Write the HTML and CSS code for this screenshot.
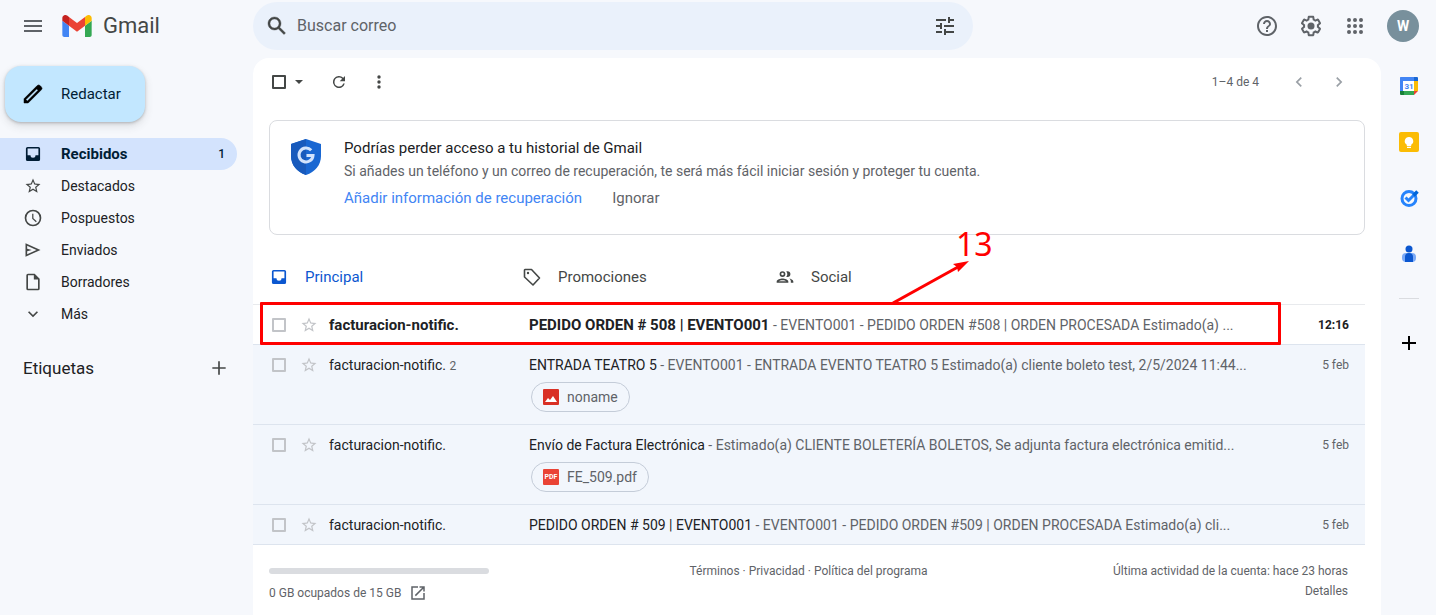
FILE: index.html
```html
<!DOCTYPE html>
<html lang="es">
<head>
<meta charset="utf-8">
<meta name="viewport" content="width=device-width, initial-scale=1">
<title>Recibidos - Gmail</title>
<link rel="stylesheet" href="styles.css">
</head>
<body>
<svg class="defs" aria-hidden="true">
  <symbol id="star" viewBox="0 0 24 24"><path d="M22 9.24l-7.19-.62L12 2 9.19 8.63 2 9.24l5.46 4.73L5.82 21 12 17.27 18.18 21l-1.63-7.03L22 9.24zM12 15.4l-3.76 2.27 1-4.28-3.32-2.88 4.38-.38L12 6.1l1.71 4.04 4.38.38-3.32 2.88 1 4.28L12 15.4z"/></symbol>
  <symbol id="inbox" viewBox="0 0 24 24"><path d="M18.500 3.500h-13a2 2 0 0 0-2 2v13a2 2 0 0 0 2 2h13a2 2 0 0 0 2-2v-13a2 2 0 0 0-2-2zm0 10H15a3 3 0 0 1-6 0H5.500v-8h13v8z"/></symbol>
</svg>

<header class="topbar">
  <div class="brand">
    <button class="icon-btn" aria-label="Menú principal"><svg class="icon-24 muted" viewBox="0 0 24 24"><path d="M3 18h18v-2H3v2zm0-5h18v-2H3v2zm0-7v2h18V6H3z"/></svg></button>
    <a class="logo" href="#">
      <svg class="logo-mark" viewBox="52 42 88 66" aria-hidden="true">
        <path fill="#4285f4" d="M58 108h14V74L52 59v43c0 3.32 2.69 6 6 6"/>
        <path fill="#34a853" d="M120 108h14c3.32 0 6-2.69 6-6V59l-20 15"/>
        <path fill="#fbbc04" d="M120 48v26l20-15v-8c0-7.42-8.47-11.65-14.4-7.2"/>
        <path fill="#ea4335" d="M72 74V48l24 18 24-18v26L96 92"/>
        <path fill="#c5221f" d="M52 51v8l20 15V48l-5.6-4.2c-5.94-4.45-14.4-.22-14.4 7.2"/>
      </svg>
      <span>Gmail</span>
    </a>
  </div>
  <form class="search" role="search">
    <button type="button" class="icon-btn" aria-label="Buscar"><svg class="icon-24" viewBox="0 0 24 24"><path d="M20.49 19l-5.73-5.73C15.53 12.2 16 10.91 16 9.5 16 5.91 13.09 3 9.5 3S3 5.91 3 9.5 5.91 16 9.5 16c1.41 0 2.7-.47 3.77-1.24L19 20.49 20.49 19zM5 9.5C5 7.01 7.01 5 9.5 5S14 7.01 14 9.5 11.99 14 9.5 14 5 11.99 5 9.5z" stroke="#444746" stroke-width=".4"/></svg></button>
    <input type="text" placeholder="Buscar correo" aria-label="Buscar correo">
    <button type="button" class="icon-btn" aria-label="Opciones de búsqueda"><svg class="icon-24" viewBox="0 0 24 24"><path d="M3 17v2h6v-2H3zM3 5v2h10V5H3zm10 16v-2h8v-2h-8v-2h-2v6h2zM7 9v2H3v2h4v2h2V9H7zm14 4v-2H11v2h10zm-6-4h2V7h4V5h-4V3h-2v6z"/></svg></button>
  </form>
  <nav class="account">
    <button class="icon-btn" aria-label="Asistencia"><svg class="icon-24 muted" viewBox="0 0 24 24"><path d="M11 18h2v-2h-2v2zm1-16C6.48 2 2 6.48 2 12s4.48 10 10 10 10-4.48 10-10S17.52 2 12 2zm0 18c-4.41 0-8-3.59-8-8s3.59-8 8-8 8 3.59 8 8-3.59 8-8 8zm0-14c-2.21 0-4 1.79-4 4h2c0-1.1.9-2 2-2s2 .9 2 2c0 2-3 1.75-3 5h2c0-2.25 3-2.5 3-5 0-2.21-1.79-4-4-4z"/></svg></button>
    <button class="icon-btn" aria-label="Configuración"><svg class="icon-24 muted" viewBox="0 0 24 24"><path d="M13.85 22.25h-3.7c-.74 0-1.36-.54-1.45-1.27l-.27-1.89c-.27-.14-.53-.29-.79-.46l-1.8.72c-.7.26-1.47-.03-1.81-.65L2.2 15.53c-.35-.66-.2-1.44.36-1.88l1.53-1.19c-.01-.15-.02-.3-.02-.46 0-.15.01-.31.02-.46l-1.52-1.19c-.59-.45-.74-1.26-.37-1.88l1.85-3.19c.34-.62 1.11-.9 1.79-.63l1.81.73c.26-.17.52-.32.78-.46l.27-1.91c.09-.7.71-1.25 1.44-1.25h3.7c.74 0 1.36.54 1.45 1.27l.27 1.89c.27.14.53.29.79.46l1.8-.72c.71-.26 1.48.03 1.82.65l1.84 3.18c.36.66.2 1.44-.36 1.88l-1.52 1.19c.01.15.02.3.02.46s-.01.31-.02.46l1.52 1.19c.56.45.72 1.23.37 1.86l-1.86 3.22c-.34.62-1.11.9-1.8.63l-1.8-.72c-.26.17-.52.32-.78.46l-.27 1.91c-.1.68-.72 1.22-1.46 1.22zm-3.23-2h2.76l.37-2.55.53-.22c.44-.18.88-.44 1.34-.78l.45-.34 2.38.96 1.38-2.4-2.03-1.58.07-.56c.03-.26.06-.51.06-.78s-.03-.53-.06-.78l-.07-.56 2.03-1.58-1.39-2.4-2.39.96-.45-.35c-.42-.32-.87-.58-1.33-.77l-.52-.22-.37-2.55h-2.76l-.37 2.55-.53.21c-.44.19-.88.44-1.34.79l-.45.33-2.38-.95-1.39 2.39 2.03 1.58-.07.56a7 7 0 0 0-.06.79c0 .26.02.53.06.78l.07.56-2.03 1.58 1.38 2.4 2.39-.96.45.35c.43.33.86.58 1.33.77l.53.22.38 2.55z"/><circle cx="12" cy="12" r="3.5"/></svg></button>
    <button class="icon-btn" aria-label="Aplicaciones de Google"><svg class="icon-24 muted" viewBox="0 0 24 24"><path d="M6 8a2 2 0 1 0 0-4 2 2 0 0 0 0 4zm6 12a2 2 0 1 0 0-4 2 2 0 0 0 0 4zm-6 0a2 2 0 1 0 0-4 2 2 0 0 0 0 4zm0-6a2 2 0 1 0 0-4 2 2 0 0 0 0 4zm6 0a2 2 0 1 0 0-4 2 2 0 0 0 0 4zm4-8a2 2 0 1 0 4 0 2 2 0 0 0-4 0zm-4 2a2 2 0 1 0 0-4 2 2 0 0 0 0 4zm6 6a2 2 0 1 0 0-4 2 2 0 0 0 0 4zm0 6a2 2 0 1 0 0-4 2 2 0 0 0 0 4z"/></svg></button>
    <button class="avatar" aria-label="Cuenta de Google">W</button>
  </nav>
</header>

<div class="workspace">
  <aside class="sidebar">
    <button class="compose"><svg class="icon-24" viewBox="0 0 24 24"><path d="M20.41 4.94l-1.35-1.35a2 2 0 0 0-2.83 0L3 16.82V21h4.18L20.41 7.77a2 2 0 0 0 0-2.83zM6.41 19.06l-1.47-1.47 10.7-10.7 1.47 1.47-10.7 10.7z" stroke="#000" stroke-width=".5"/></svg>Redactar</button>
    <nav class="folders">
      <a class="folder active" href="#"><svg class="icon-20" aria-hidden="true"><use href="#inbox"/></svg><span>Recibidos</span><b>1</b></a>
      <a class="folder" href="#"><svg class="icon-18" aria-hidden="true"><use href="#star"/></svg><span>Destacados</span></a>
      <a class="folder" href="#"><svg class="icon-20" viewBox="0 0 24 24"><path d="M12 2a10 10 0 1 0 0 20 10 10 0 0 0 0-20zm0 18a8 8 0 1 1 0-16 8 8 0 0 1 0 16zm.5-13H11v6l4.5 4.2 1-1.2-4-3.8V7z"/></svg><span>Pospuestos</span></a>
      <a class="folder" href="#"><svg class="icon-20" viewBox="0 0 24 24"><path d="M3 4v16l18-8L3 4zm2 3l11.200 5L5 17v-3.500l5.500-1.500L5 10.500V7z"/></svg><span>Enviados</span></a>
      <a class="folder" href="#"><svg class="icon-20" viewBox="0 0 24 24"><path d="M14 2H6a2 2 0 0 0-2 2v16a2 2 0 0 0 2 2h12a2 2 0 0 0 2-2V8l-6-6zm4 18H6V4h7v5h5v11z"/></svg><span>Borradores</span></a>
      <a class="folder" href="#"><svg class="icon-20" viewBox="0 0 24 24"><path d="M16.590 8.590L12 13.170 7.410 8.590 6 10l6 6 6-6z"/></svg><span>Más</span></a>
    </nav>
    <div class="labels"><h2>Etiquetas</h2><button class="icon-btn" aria-label="Crear etiqueta"><svg class="icon-20" viewBox="0 0 24 24"><path d="M20 13h-7v7h-2v-7H4v-2h7V4h2v7h7v2z"/></svg></button></div>
  </aside>

  <main class="mail">
    <div class="toolbar">
      <input type="checkbox" class="check dark" aria-label="Seleccionar todo">
      <button class="icon-btn caret" aria-label="Seleccionar"><svg class="icon-20" viewBox="0 0 20 20"><path d="M6 8l4 4 4-4z"/></svg></button>
      <button class="icon-btn refresh" aria-label="Actualizar"><svg class="icon-18" viewBox="0 0 24 24"><path d="M17.650 6.350A8 8 0 1 0 19.730 14h-2.080A6 6 0 1 1 12 6c1.660 0 3.140.69 4.220 1.780L13 11h7V4l-2.350 2.350z"/></svg></button>
      <button class="icon-btn" aria-label="Más"><svg class="icon-20" viewBox="0 0 20 20"><circle cx="10" cy="5" r="1.700"/><circle cx="10" cy="10" r="1.700"/><circle cx="10" cy="15" r="1.700"/></svg></button>
      <span class="count">1–4 de 4</span>
      <button class="icon-btn pager" aria-label="Más recientes"><svg class="icon-20" viewBox="0 0 24 24"><path d="M15.410 7.410L14 6l-6 6 6 6 1.410-1.410L10.830 12z"/></svg></button>
      <button class="icon-btn pager" aria-label="Anteriores"><svg class="icon-20" viewBox="0 0 24 24"><path d="M8.590 16.590L10 18l6-6-6-6-1.410 1.410L13.170 12z"/></svg></button>
    </div>

    <section class="notice">
      <svg class="shield" viewBox="0 0 30 36" aria-hidden="true">
        <path fill="#1967d2" d="M15 0l15 5v12c0 9-6 16-15 19C6 33 0 26 0 17V5z"/>
        <path fill="#185abc" d="M15 0v36C6 33 0 26 0 17V5z"/>
        <path fill="none" stroke="#d2e3fc" stroke-width="3" d="M20.200 11.200A7 7 0 1 0 22 16.500h-6.500"/>
      </svg>
      <div class="notice-text">
        <h3>Podrías perder acceso a tu historial de Gmail</h3>
        <p>Si añades un teléfono y un correo de recuperación, te será más fácil iniciar sesión y proteger tu cuenta.</p>
        <div class="notice-actions"><a href="#">Añadir información de recuperación</a><button>Ignorar</button></div>
      </div>
    </section>

    <nav class="tabs">
      <a class="tab active" href="#"><svg class="icon-20" aria-hidden="true"><use href="#inbox"/></svg>Principal</a>
      <a class="tab" href="#"><svg class="icon-20" viewBox="0 0 20 20"><path fill="none" stroke="#444746" stroke-width="1.600" stroke-linejoin="round" d="M3 2.500h6.500l8 8.500-6.500 7L2.500 10V3z"/><circle cx="6" cy="6" r="1.200"/></svg>Promociones</a>
      <a class="tab" href="#"><svg class="icon-20" viewBox="0 0 24 24"><path d="M9 13.750c-2.340 0-7 1.170-7 3.500V19h14v-1.750c0-2.330-4.660-3.500-7-3.500zM4.340 17c.84-.58 2.870-1.250 4.660-1.250s3.820.67 4.660 1.250H4.340zM9 12a3.500 3.500 0 1 0 0-7 3.500 3.500 0 0 0 0 7zm0-5a1.500 1.500 0 1 1 0 3 1.500 1.500 0 0 1 0-3zm8.040 6.810c1.160.84 1.960 1.960 1.960 3.440V19h3v-1.750c0-2.020-3.500-3.170-4.960-3.440zM15 12a3.500 3.500 0 1 0 0-7c-.54 0-1.040.13-1.500.35a5 5 0 0 1 0 6.300c.46.220.96.350 1.500.350z"/></svg>Social</a>
    </nav>

    <div class="messages">
      <article class="message unread">
        <input type="checkbox" class="check" aria-label="Seleccionar mensaje">
        <button class="star" aria-label="Destacar"><svg class="icon-18"><use href="#star"/></svg></button>
        <div class="sender">facturacion-notific.</div>
        <div class="body"><p><strong>PEDIDO ORDEN # 508 | EVENTO001</strong> - EVENTO001 - PEDIDO ORDEN #508 | ORDEN PROCESADA Estimado(a) ...</p></div>
        <time>12:16</time>
        <div class="callout">
          <span>13</span>
          <svg viewBox="0 0 78 44" aria-hidden="true"><path d="M1 43L66 7" fill="none" stroke="#f00" stroke-width="3"/><path fill="#f00" d="M77 1L61 4l4 3 1 5z"/></svg>
        </div>
      </article>
      <article class="message">
        <input type="checkbox" class="check" aria-label="Seleccionar mensaje">
        <button class="star" aria-label="Destacar"><svg class="icon-18"><use href="#star"/></svg></button>
        <div class="sender">facturacion-notific. <small>2</small></div>
        <div class="body"><p><span>ENTRADA TEATRO 5</span> - EVENTO001 - ENTRADA EVENTO TEATRO 5 Estimado(a) cliente boleto test, 2/5/2024 11:44...</p>
          <button class="attachment"><svg class="icon-16" viewBox="0 0 16 16"><rect width="16" height="16" rx="1" fill="#d93025"/><path fill="#fff" d="M2 13l3-4 2 2 3-4 4 6z"/></svg>noname</button></div>
        <time>5 feb</time>
      </article>
      <article class="message">
        <input type="checkbox" class="check" aria-label="Seleccionar mensaje">
        <button class="star" aria-label="Destacar"><svg class="icon-18"><use href="#star"/></svg></button>
        <div class="sender">facturacion-notific.</div>
        <div class="body"><p><span>Envío de Factura Electrónica</span> - Estimado(a) CLIENTE BOLETERÍA BOLETOS, Se adjunta factura electrónica emitid...</p>
          <button class="attachment"><i class="pdf">PDF</i>FE_509.pdf</button></div>
        <time>5 feb</time>
      </article>
      <article class="message">
        <input type="checkbox" class="check" aria-label="Seleccionar mensaje">
        <button class="star" aria-label="Destacar"><svg class="icon-18"><use href="#star"/></svg></button>
        <div class="sender">facturacion-notific.</div>
        <div class="body"><p><span>PEDIDO ORDEN # 509 | EVENTO001</span> - EVENTO001 - PEDIDO ORDEN #509 | ORDEN PROCESADA Estimado(a) cli...</p></div>
        <time>5 feb</time>
      </article>
    </div>

    <footer class="footer">
      <div class="storage"><div class="meter"></div><a href="#">0 GB ocupados de 15 GB <svg class="icon-18" viewBox="0 0 24 24"><path d="M19 19H5V5h7V3H3v18h18v-9h-2v7zM14 3v2h3.590l-9.830 9.830 1.410 1.410L19 6.410V10h2V3h-7z"/></svg></a></div>
      <div class="legal"><a href="#">Términos</a> · <a href="#">Privacidad</a> · <a href="#">Política del programa</a></div>
      <div class="activity">Última actividad de la cuenta: hace 23 horas<br><a href="#">Detalles</a></div>
    </footer>
  </main>

  <aside class="rail">
    <button class="icon-btn" aria-label="Calendar"><svg class="icon-20" viewBox="0 0 20 20"><path fill="#4285f4" d="M1.500 1H15v4H5v10H1V1.500z"/><path fill="#1967d2" d="M15 1h3a1 1 0 0 1 1 1v3h-4z"/><path fill="#fbbc04" d="M15 5h4v10h-4z"/><path fill="#34a853" d="M5 15h10v4H5z"/><path fill="#188038" d="M1 15h4v4H2a1 1 0 0 1-1-1z"/><path fill="#ea4335" d="M15 15h4l-4 4z"/><path fill="#fff" d="M4 5h11v10H4z"/><text x="10" y="13" class="cal-day">31</text></svg></button>
    <button class="icon-btn" aria-label="Keep"><svg class="icon-20" viewBox="0 0 20 20"><rect width="20" height="20" rx="2" fill="#fbbc04"/><path fill="#fff" d="M10 5a4.200 4.200 0 0 0-2.200 7.800V14h4.400v-1.200A4.200 4.200 0 0 0 10 5zM8 14.800h4V16H8z"/></svg></button>
    <button class="icon-btn" aria-label="Tasks"><svg class="icon-20" viewBox="0 0 20 20"><circle cx="10" cy="10.500" r="7" fill="none" stroke="#2684fc" stroke-width="3"/><path fill="none" stroke="#2684fc" stroke-width="3" d="M6.500 9.500l3 3 7-7"/><path fill="none" stroke="#0066da" stroke-width="3.500" d="M14.500 7.500l4-4"/></svg></button>
    <button class="icon-btn" aria-label="Contactos"><svg class="icon-20" viewBox="0 0 20 20"><rect x="3" y="9" width="14" height="9" rx="4" fill="#7baaf7"/><path fill="#0b57d0" d="M6 18v-5a4 4 0 0 1 8 0v5z"/><circle cx="10" cy="5" r="3.500" fill="#0b57d0"/></svg></button>
    <hr>
    <button class="icon-btn" aria-label="Obtener complementos"><svg class="icon-20" viewBox="0 0 20 20"><path fill="#000" d="M9 3h2v6h6v2h-6v6H9v-6H3V9h6z"/></svg></button>
  </aside>
</div>
</body>
</html>
```
FILE: styles.css
```css
* { box-sizing: border-box; }

body {
  margin: 0;
  min-height: 100vh;
  display: flex;
  flex-direction: column;
  background: #f6f8fc;
  color: #202124;
  font: 14px/20px Roboto, sans-serif;
}

h2, h3, p { margin: 0; font-weight: 400; }
a { color: inherit; text-decoration: none; }
button { padding: 0; border: 0; background: none; font: inherit; color: inherit; cursor: pointer; }
svg { display: block; flex: none; fill: #444746; }
.defs { position: absolute; width: 0; height: 0; }
.icon-16 { width: 16px; height: 16px; }
.icon-18 { width: 18px; height: 18px; }
.icon-20 { width: 20px; height: 20px; }
.icon-24 { width: 24px; height: 24px; }
.muted { fill: #5f6368; }
.icon-btn { display: flex; align-items: center; justify-content: center; }

/* Top bar */
.topbar { display: flex; align-items: center; padding: 2px 17px 8px 0; }
.brand { display: flex; align-items: center; width: 253px; padding-left: 21px; gap: 17px; }
.logo { display: flex; align-items: center; gap: 11px; font-size: 22px; line-height: 28px; color: #444746; }
.logo-mark { width: 30px; height: 22px; }
.search { display: flex; align-items: center; width: 720px; height: 48px; padding: 0 16px 0 12px; border-radius: 24px; background: #eaf1fb; }
.search input { flex: 1; min-width: 0; margin: 0 8px; padding: 0; border: 0; outline: 0; background: none; font: 16px/24px Roboto, sans-serif; color: #202124; }
.search input::placeholder { color: #5f6368; opacity: 1; }
.account { display: flex; align-items: center; gap: 20px; margin-left: auto; }
.avatar { width: 32px; height: 32px; border-radius: 50%; background: #78909c; color: #fff; font-weight: 700; }

/* Page columns */
.workspace { flex: 1; display: flex; }
.sidebar { width: 253px; flex: none; padding-top: 8px; }
.mail { flex: 1; min-width: 0; background: #fff; border-radius: 16px 16px 0 0; }
.rail { width: 55px; flex: none; display: flex; flex-direction: column; align-items: center; gap: 36px; padding-top: 18px; }
.rail hr { width: 20px; height: 1px; margin: -2px 0; border: 0; background: #dadce0; }
.cal-day { font: 700 8px Roboto, sans-serif; fill: #4285f4; text-anchor: middle; }

/* Sidebar */
.compose { display: flex; align-items: center; gap: 16px; height: 56px; margin: 0 0 16px 5px; padding: 0 24px 0 16px; border-radius: 16px; background: #c2e7ff; color: #001d35; font-size: 15px; box-shadow: 0 1px 3px rgba(60, 64, 67, .3), 0 4px 8px rgba(60, 64, 67, .15); }
.compose svg { fill: #000; }
.folders { padding-right: 16px; }
.folder { display: grid; grid-template-columns: 20px 1fr auto; align-items: center; gap: 18px; height: 32px; padding: 0 12px 0 23px; border-radius: 0 16px 16px 0; }
.folder svg { justify-self: center; }
.folder.active { background: #d3e3fd; color: #001d35; font-weight: 700; font-size: 15px; }
.folder.active svg { fill: #001d35; }
.folder b { font-size: 12px; font-weight: 500; }
.labels { display: flex; justify-content: space-between; align-items: center; padding: 28px 24px 0 23px; }
.labels h2 { font-size: 17px; line-height: 20px; }

/* Toolbar */
.check { appearance: none; flex: none; width: 14px; height: 14px; margin: 0; border: 2px solid #c2c4c8; border-radius: 1px; }
.check.dark { border-color: #444746; }
.toolbar { display: flex; align-items: center; height: 48px; padding: 0 32px 0 19px; }
.caret { margin-left: 3px; }
.refresh { margin: 0 21px; }
.count { margin: 0 30px 0 auto; font-size: 12px; color: #5f6368; }
.pager + .pager { margin-left: 20px; }
.pager svg { fill: #9aa0a6; }

/* Recovery notice */
.notice { display: flex; gap: 23px; margin: 14px 16px; padding: 17px 21px 26px; border: 1px solid #dadce0; border-radius: 8px; }
.shield { width: 30px; height: 36px; margin-top: 1px; }
.notice h3 { font-size: 15px; }
.notice p { margin-top: 3px; color: #5f6368; }
.notice-actions { display: flex; gap: 30px; margin-top: 7px; font-size: 15px; color: #5f6368; }
.notice-actions a { color: #4285f4; }

/* Category tabs */
.tabs { display: flex; height: 55px; padding-left: 16px; font-size: 15px; color: #444746; }
.tab { display: flex; align-items: center; width: 253px; gap: 16px; }
.tab.active { color: #0b57d0; }
.tab.active svg { fill: #0b57d0; }

/* Message list */
.messages { margin-right: 16px; border-top: 1px solid #e8eaed; }
.message { position: relative; display: grid; grid-template-columns: 17px 18px 189px minmax(0, 1fr) 80px; column-gap: 11px; align-items: start; padding: 10px 16px 9px 19px; border-bottom: 1px solid #dde4ee; background: #f2f6fc; }
.message.unread { background: #fff; }
.message .check { margin-top: 3px; }
.star { margin-top: 1px; }
.star svg { fill: #c2c4c8; }
.sender { white-space: nowrap; }
.sender small { font-size: 12px; color: #5f6368; }
.unread .sender, .body strong { font-size: 15px; font-weight: 700; }
.body p { overflow: hidden; white-space: nowrap; text-overflow: ellipsis; color: #5f6368; }
.body p span, .body p strong { color: #202124; }
.message time { text-align: right; font-size: 12px; color: #5f6368; }
.unread time { font-weight: 700; color: #202124; }
.attachment { display: flex; align-items: center; gap: 8px; height: 30px; margin: 7px 0 3px 2px; padding: 0 11px; border: 1px solid #c4ccd8; border-radius: 15px; color: #5f6368; }
.pdf { width: 16px; height: 16px; border-radius: 1px; background: #ea4335; color: #fff; font: 700 7px/16px Roboto, sans-serif; text-align: center; }

/* Highlight drawn over the first message */
.callout { position: absolute; inset: -3px 84px -1px 7px; border: 3px solid #f00; border-radius: 1px; color: #f00; pointer-events: none; }
.callout span { position: absolute; left: 693px; bottom: 78px; font: 32px/40px "Noto Sans", sans-serif; }
.callout svg { position: absolute; left: 629px; bottom: 38px; width: 78px; height: 44px; }

/* Footer */
.footer { display: grid; grid-template-columns: 1fr auto 1fr; padding: 16px 33px 8px 16px; font-size: 12px; color: #5f6368; }
.meter { width: 220px; height: 6px; margin: 7px 0 9px; border-radius: 3px; background: #dadce0; }
.storage a { display: flex; align-items: center; gap: 8px; }
.storage svg { fill: #5f6368; }
.activity { text-align: right; }
```
